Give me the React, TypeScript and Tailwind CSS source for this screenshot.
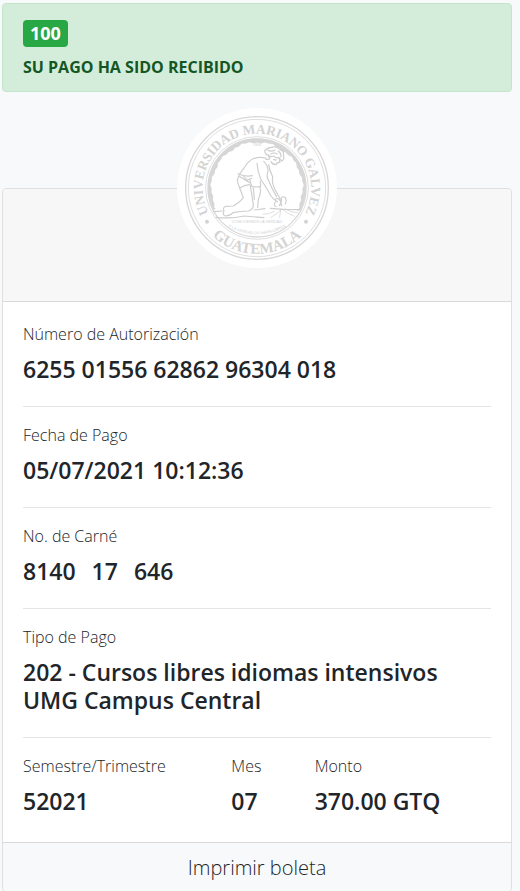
import type { ReactNode } from "react";

function Seal() {
  // Ragged inner edge of the dark band that frames the upper part of the emblem.
  const edge: string[] = [];
  for (let i = 0; i <= 120; i++) {
    const a = ((-207 + i * 1.98) * Math.PI) / 180;
    const r = 137 + Math.sin(i * 1.3) * 1.5 + Math.cos(i * 0.37) * 2;
    edge.push(`L${(262 + r * Math.cos(a)).toFixed(1)} ${(262 + r * Math.sin(a)).toFixed(1)}`);
  }
  return (
    <svg viewBox="22 22 480 480" className="size-40 shrink-0" role="img" aria-label="Universidad Mariano Gálvez de Guatemala">
      <defs>
        <path id="seal-top" d="M262 425 A163 163 0 0 1 262 99 A163 163 0 0 1 262 425" />
        <path id="seal-bottom" d="M65 262 A197 197 0 0 0 459 262" />
        <path id="motto-a" d="M172 366 Q262 366 352 366" />
        <path id="motto-b" d="M160 370 Q262 432 364 370" />
      </defs>
      <circle cx="262" cy="262" r="240" fill="#fff" />
      <g fill="none" stroke="#d8d8d8">
        <circle cx="262" cy="262" r="214" strokeWidth="4" />
        <circle cx="262" cy="262" r="206" strokeWidth="2.5" />
        <circle cx="262" cy="262" r="154" strokeWidth="2.5" />
        <circle cx="262" cy="262" r="147" strokeWidth="4" />
      </g>
      <path d={`M131 327 A147 147 0 1 1 393 327 ${edge.slice().reverse().join(" ")} Z`} fill="#d6d6d6" />
      <g fill="#d3d3d3" fontFamily="'Liberation Serif', serif" fontWeight="700" textAnchor="middle">
        <text fontSize="40">
          <textPath href="#seal-top" startOffset="50%">UNIVERSIDAD MARIANO GALVEZ</textPath>
        </text>
        <text fontSize="45">
          <textPath href="#seal-bottom" startOffset="50%">GUATEMALA</textPath>
        </text>
      </g>
      <g fill="#d0d0d0" fontFamily="'Liberation Sans', sans-serif" fontSize="12" textAnchor="middle">
        <text x="262" y="136" fontSize="11">1966</text>
        <text>
          <textPath href="#motto-a" startOffset="50%">CONOCEREIS LA VERDAD</textPath>
        </text>
        <text>
          <textPath href="#motto-b" startOffset="50%">Y LA VERDAD OS HARA LIBRES</textPath>
        </text>
      </g>
      <circle cx="112" cy="363" r="6" fill="#d3d3d3" />
      <circle cx="409" cy="363" r="6" fill="#d3d3d3" />
      <g fill="none" stroke="#cecece" strokeWidth="3.5" strokeLinecap="round" strokeLinejoin="round">
        {/* head and hair */}
        <path d="M285 150 Q292 141 305 140 Q321 136 331 146 Q345 151 341 164 Q346 174 337 181 Q331 178 329 171 Q318 174 312 166 Q303 171 297 164 Q287 163 285 150Z" />
        <path d="M294 148 Q303 155 316 148 M304 160 Q313 154 323 160 M326 151 Q335 158 334 169" />
        <path d="M297 164 L300 175 Q292 178 288 174 M329 173 L331 184 L322 187 L319 192 Q310 192 304 184 M312 177 L319 178" strokeWidth="4" />
        {/* back and torso */}
        <path d="M288 172 Q271 168 253 173 Q235 181 222 204 Q208 219 203 240 Q206 252 210 262" />
        <path d="M205 219 Q225 229 248 225 M222 227 L233 239 L246 233 M209 227 L240 246" />
        <path d="M210 262 Q225 253 240 252 M246 257 Q260 261 273 257 L272 241 M240 236 L246 257" />
        {/* arms */}
        <path d="M262 188 Q263 210 273 235 Q290 260 304 286 Q312 298 324 303 M282 182 Q296 195 295 212 Q289 228 297 240 Q306 263 321 288" />
        <path d="M297 192 Q299 208 309 228 Q306 247 315 264 L332 296" />
        {/* legs */}
        <path d="M210 262 L221 291 Q210 306 190 316 L168 317 Q158 321 163 331 Q157 344 168 346 Q182 345 190 336 Q214 331 236 331 Q252 326 251 312 L242 255" />
        <path d="M251 262 L254 296 M271 260 Q276 276 266 296 L264 320" />
        {/* hands and plant */}
        <path d="M317 296 Q326 289 332 301 L336 316 M329 315 Q337 306 335 293 Q337 284 348 292 Q352 302 347 310 M319 303 Q309 312 319 318" />
        {/* ground */}
        <path d="M132 333 L158 331 M139 350 Q185 355 223 346 L283 351 M254 328 L286 324 M302 323 L342 326 L391 327" />
        <path d="M304 350 Q325 339 335 326 M340 327 Q350 338 374 347 M345 323 Q358 334 383 336 M314 332 Q296 342 280 341 M333 326 L330 350" strokeWidth="2" />
      </g>
    </svg>
  );
}

function Field({ label, children }: { label: string; children: ReactNode }) {
  return (
    <div>
      <dt className="text-base leading-6 font-light">{label}</dt>
      <dd className="pt-[9px] pb-[7px] text-[23px] leading-7 font-semibold">{children}</dd>
    </div>
  );
}

function Divider() {
  return <hr className="my-4 border-t border-[#e5e5e5]" />;
}

export default function App() {
  return (
    <main className="min-h-screen bg-[#f8f9fa] pt-[3px] pr-2 pl-[2px] font-['Open_Sans','Noto_Sans',sans-serif] text-[#212529]">
      <div role="alert" className="rounded border border-[#c3e6cb] bg-[#d4edda] px-5 pt-4 pb-3 text-[#155724]">
        <span className="block w-fit rounded bg-[#28a745] px-[7px] text-[18px] leading-[27px] font-bold text-white">100</span>
        <p className="mt-2 text-base leading-6 font-bold">SU PAGO HA SIDO RECIBIDO</p>
      </div>

      <section className="mt-24 rounded border border-[#dfdfdf] bg-white">
        <header className="flex justify-center rounded-t border-b border-[#d9d9d9] bg-[#f7f7f7] pb-[33px]">
          <div className="-mt-[81px]">
            <Seal />
          </div>
        </header>

        <div className="p-5">
          <dl>
            <Field label="Número de Autorización">6255 01556 62862 96304 018</Field>
          </dl>
          <Divider />
          <dl>
            <Field label="Fecha de Pago">05/07/2021 10:12:36</Field>
          </dl>
          <Divider />
          <dl>
            <Field label="No. de Carné">
              <span className="flex gap-4">
                <span>8140</span>
                <span>17</span>
                <span>646</span>
              </span>
            </Field>
          </dl>
          <Divider />
          <dl>
            <Field label="Tipo de Pago">202 - Cursos libres idiomas intensivos UMG Campus Central</Field>
          </dl>
          <Divider />
          <dl className="-mx-4 grid grid-cols-12 *:px-4 *:first:col-span-5 *:last:col-span-5 *:nth-2:col-span-2">
            <Field label="Semestre/Trimestre">52021</Field>
            <Field label="Mes">07</Field>
            <Field label="Monto">370.00 GTQ</Field>
          </dl>
        </div>

        <footer className="rounded-b border-t border-[#d9d9d9] bg-[#f8f9fa]">
          <button type="button" className="block w-full pt-[9px] pb-[7px] text-xl leading-8 font-light">
            Imprimir boleta
          </button>
        </footer>
      </section>
    </main>
  );
}
